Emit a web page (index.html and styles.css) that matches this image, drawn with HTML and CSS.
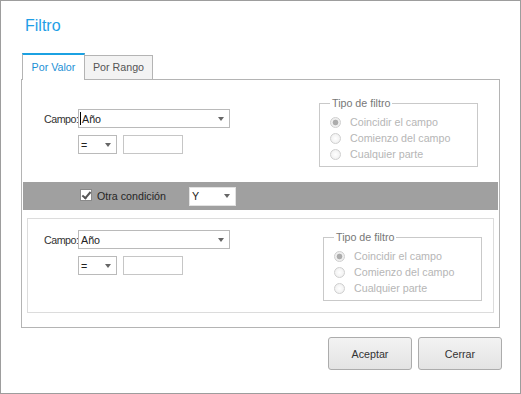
FILE: index.html
```html
<!DOCTYPE html>
<html lang="es">
<head>
  <meta charset="UTF-8">
  <title>Filtro</title>
  <link rel="stylesheet" href="styles.css">
</head>
<body>
  <div class="window">
    <h1 class="title">Filtro</h1>

    <div class="tabs">
      <span class="tab tab-active">Por Valor</span>
      <span class="tab tab-rango">Por Rango</span>
    </div>

    <div class="panel">
      <div class="cond cond-main">
        <div class="fields">
          <div class="row">
            <label class="lbl">Campo:</label>
            <div class="combo combo-wide combo-focus"><span class="cursor"></span><span class="value">Año</span><i class="caret"></i></div>
          </div>
          <div class="row row-sub">
            <div class="combo combo-op"><span class="value">=</span><i class="caret"></i></div>
            <input class="txt" type="text">
          </div>
        </div>
        <fieldset class="kind">
          <legend>Tipo de filtro</legend>
          <label class="opt"><input type="radio" name="k1" checked disabled>Coincidir el campo</label>
          <label class="opt"><input type="radio" name="k1" disabled>Comienzo del campo</label>
          <label class="opt"><input type="radio" name="k1" disabled>Cualquier parte</label>
        </fieldset>
      </div>

      <div class="bar">
        <label class="chk"><input type="checkbox" checked>Otra condición</label>
        <div class="combo combo-join"><span class="value">Y</span><i class="caret"></i></div>
      </div>

      <div class="cond cond-extra">
        <div class="fields">
          <div class="row">
            <label class="lbl">Campo:</label>
            <div class="combo combo-wide"><span class="value">Año</span><i class="caret"></i></div>
          </div>
          <div class="row row-sub">
            <div class="combo combo-op"><span class="value">=</span><i class="caret"></i></div>
            <input class="txt" type="text">
          </div>
        </div>
        <fieldset class="kind">
          <legend>Tipo de filtro</legend>
          <label class="opt"><input type="radio" name="k2" checked disabled>Coincidir el campo</label>
          <label class="opt"><input type="radio" name="k2" disabled>Comienzo del campo</label>
          <label class="opt"><input type="radio" name="k2" disabled>Cualquier parte</label>
        </fieldset>
      </div>
    </div>

    <div class="actions">
      <button class="btn">Aceptar</button>
      <button class="btn">Cerrar</button>
    </div>
  </div>
</body>
</html>
```

FILE: styles.css
```css
* {
  box-sizing: border-box;
}
body {
  margin: 0;
  font-family: "Liberation Sans", Arial, sans-serif;
  font-size: 10.7px;
  color: #333;
  background: #fff;
}
.window {
  width: 521px;
  height: 394px;
  border: 1px solid #9d9d9d;
  padding: 0 18px 0 20px;
}
.title {
  margin: 15px 0 0 4px;
  font-size: 16px;
  line-height: 20px;
  font-weight: normal;
  color: #1e9ee6;
}

/* tabs */
.tabs {
  display: flex;
  align-items: flex-end;
  margin: 17px 0 -1px 1px;
}
.tab {
  height: 25px;
  line-height: 23px;
  text-align: center;
  border: 1px solid #b4b4b4;
  background: #f3f3f3;
  color: #555;
}
.tab-active {
  width: 63px;
  height: 27px;
  line-height: 25px;
  border-top: 2px solid #1ba1e2;
  border-bottom: 0;
  background: #fff;
  color: #1a8fd6;
}
.tab-rango {
  width: 68px;
  border-left: 0;
}

.panel {
  width: 479px;
  height: 249px;
  border: 1px solid #b4b4b4;
  padding: 0 1px;
}

/* condition blocks */
.cond {
  display: flex;
  justify-content: space-between;
  align-items: flex-start;
}
.cond-main {
  height: 102px;
  padding: 0 20px 0 21px;
}
.cond-main .fields {
  margin-top: 29px;
}
.cond-main .kind {
  margin-top: 17px;
}
.cond-extra {
  height: 95px;
  margin: 8px 4px 0;
  border: 1px solid #dcdcdc;
  padding: 0 11px 0 16px;
}
.cond-extra .fields {
  margin-top: 11px;
}
.cond-extra .kind {
  margin-top: 12px;
}

.row {
  display: flex;
  align-items: center;
}
.row-sub {
  margin-top: 7px;
  padding-left: 34px;
}
.lbl {
  width: 34px;
  text-align: right;
  letter-spacing: -0.5px;
  white-space: nowrap;
}

.combo {
  display: flex;
  align-items: center;
  height: 19px;
  border: 1px solid #bababa;
  background: #fff;
  padding: 0 5px 0 2px;
  color: #222;
}
.combo .value {
  flex: 1;
}
.combo-wide {
  width: 152px;
}
.combo-focus {
  padding-left: 1px;
}
.cursor {
  width: 1px;
  height: 13px;
  background: #000;
  margin-right: 1px;
}
.combo-op {
  width: 39px;
}
.caret {
  width: 0;
  height: 0;
  border-left: 3.5px solid transparent;
  border-right: 3.5px solid transparent;
  border-top: 4px solid #666;
}
.txt {
  width: 60px;
  height: 19px;
  margin: 0 0 0 6px;
  padding: 0;
  border: 1px solid #c6c6c6;
  font: inherit;
}

/* tipo de filtro */
.kind {
  width: 159px;
  margin: 0;
  padding: 4px 0 4px 10px;
  border: 1px solid #c9c9c9;
  min-width: 0;
}
.kind legend {
  padding: 0 2px;
  line-height: 13px;
  color: #777;
}
.opt {
  display: flex;
  align-items: center;
  height: 16px;
  color: #b6b6b6;
}
.opt input {
  appearance: none;
  width: 11px;
  height: 11px;
  margin: 0 9px 0 0;
  border: 1px solid #cfcfcf;
  border-radius: 50%;
  background: radial-gradient(circle, #fff, #ececec);
}
.opt input:checked {
  background: radial-gradient(circle, #acacac 0 2.5px, #efefef 3.2px);
}

/* otra condicion */
.bar {
  display: flex;
  align-items: center;
  height: 28px;
  padding-left: 57px;
  background: #a0a0a0;
}
.chk {
  display: flex;
  align-items: center;
  width: 109px;
  color: #262626;
}
.chk input {
  appearance: none;
  position: relative;
  width: 12px;
  height: 12px;
  margin: -2px 5px 0 0;
  border: 1px solid #8a8a8a;
  background: #fff;
}
.chk input:checked::after {
  content: "";
  position: absolute;
  left: 3px;
  top: 0;
  width: 3px;
  height: 7px;
  border: solid #555;
  border-width: 0 2px 2px 0;
  transform: rotate(40deg);
}
.combo-join {
  width: 47px;
  border-color: #e2e2e2;
}

/* buttons */
.actions {
  display: flex;
  justify-content: flex-end;
  gap: 6px;
  margin-top: 9px;
}
.btn {
  width: 84px;
  height: 33px;
  border: 1px solid #acacac;
  border-radius: 3px;
  background: linear-gradient(#f3f3f3, #e3e3e3);
  font: inherit;
  color: #333;
}
```
